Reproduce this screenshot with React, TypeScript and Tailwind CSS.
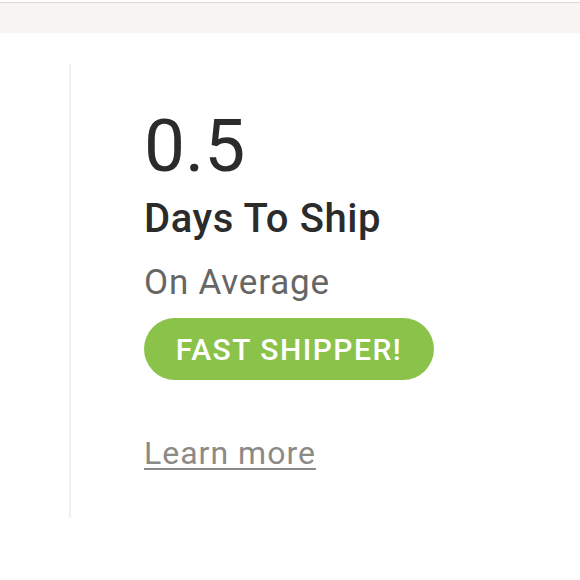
export default function App() {
  return (
    <div className="min-h-[580px] bg-white" style={{ fontFamily: "Roboto, 'Noto Sans', sans-serif" }}>
      <div className="mt-[2px] h-[31px] border-t border-[#dcd9d4] bg-[#f7f5f1]" />
      <div className="pl-[69px] pt-[31px]">
        <div className="h-[454px] border-l-2 border-[#f2f1ec] pl-[73px] pt-[46px]">
          <div className="text-[73px] leading-[72px] font-normal text-[#2b2b2b]">0.5</div>
          <div className="mt-[15px] text-[40px] leading-[44px] font-medium text-[#2b2b2b] tracking-[0.6px]">Days To Ship</div>
          <div className="mt-[22px] text-[35px] leading-[40px] text-[#666666] tracking-[0.8px]">On Average</div>
          <div className="mt-[15px] inline-flex h-[62px] w-[290px] items-center justify-center rounded-full bg-[#8bc34a] text-[30px] font-medium tracking-[1.5px] text-white">
            FAST SHIPPER!
          </div>
          <div className="mt-[53px]">
            <a href="#" className="text-[32px] leading-[40px] text-[#8c8a86] tracking-[1px] underline decoration-2 underline-offset-[4px]">
              Learn more
            </a>
          </div>
        </div>
      </div>
    </div>
  );
}
